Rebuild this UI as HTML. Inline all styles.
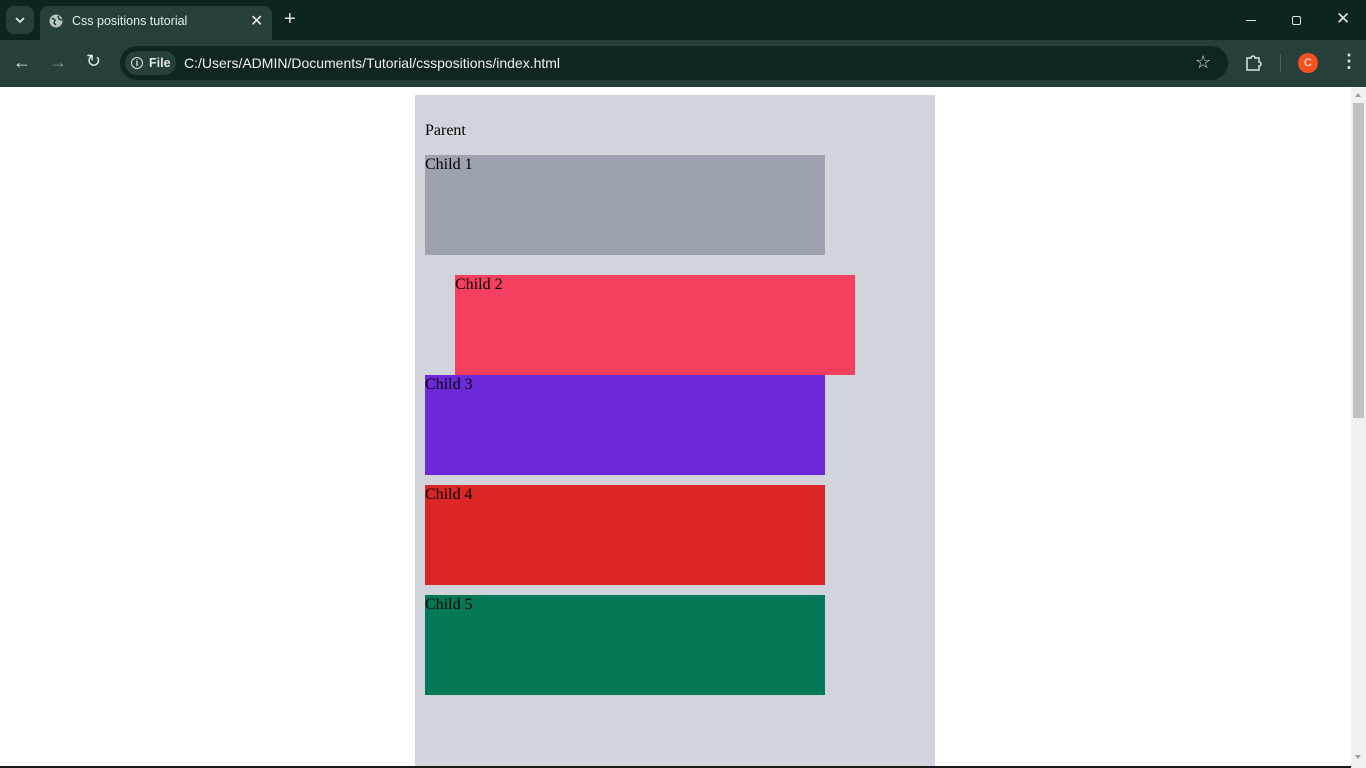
<!DOCTYPE html>
<html><head><style>
*{margin:0;padding:0;box-sizing:border-box}
body{width:1366px;height:768px;overflow:hidden;background:#fff;font-family:"Liberation Sans",sans-serif;position:relative}
.top{position:absolute;left:0;top:0;width:1366px;height:40px;background:#0c2523}
.tab{position:absolute;left:40px;top:6px;width:232px;height:34px;background:#263f3b;border-radius:8px 8px 0 0;color:#e6ecea;font-size:12.5px}
.tb{position:absolute;left:0;top:40px;width:1366px;height:47px;background:#263f3b}
.omni{position:absolute;left:120px;top:46px;width:1108px;height:34px;background:#0e2523;border-radius:17px}
.c{position:absolute;color:#dfe6e4}
.page{position:absolute;left:0;top:87px;width:1351px;height:681px;background:#fff}
.par{position:absolute;left:415px;top:95px;width:520px;height:673px;background:#d1d5db}
.b{position:absolute;width:400px;height:100px;font-family:"Liberation Serif",serif;font-size:16px;color:#000;line-height:20px}
.sb{position:absolute;left:1351px;top:87px;width:15px;height:681px;background:#f1f1f1}
</style></head><body>
<div class="top"></div>
<div style="position:absolute;left:6px;top:6px;width:28px;height:28px;background:#263f3b;border-radius:8px"></div>
<svg style="position:absolute;left:14px;top:15px" width="12" height="10"><path d="M2 3l4 4 4-4" stroke="#dfe6e4" stroke-width="1.8" fill="none"/></svg>
<div class="tab"><svg style="position:absolute;left:8px;top:7px" width="16" height="16"><circle cx="8" cy="8" r="6.5" fill="#b9c4c1"/><path d="M4 5l3 2-1 3 2 2M10 3l1 3 3 1" stroke="#263f3b" stroke-width="1.5" fill="none"/></svg><span style="position:absolute;left:32px;top:8px">Css positions tutorial</span><span style="position:absolute;left:210px;top:5px;font-size:16px">✕</span></div>
<span class="c" style="left:284px;top:8px;font-size:20px">+</span>
<div style="position:absolute;left:1246px;top:20px;width:10px;height:1px;background:#dfe6e4"></div>
<div style="position:absolute;left:1292px;top:16px;width:9px;height:9px;border:1.3px solid #dfe6e4;border-radius:2px"></div>
<span class="c" style="left:1336px;top:9px;font-size:17px">✕</span>
<div class="tb"></div>
<span class="c" style="left:13px;top:52px;font-size:18px">←</span>
<span class="c" style="left:49px;top:52px;font-size:18px;color:#7e8f8b">→</span>
<span class="c" style="left:86px;top:51px;font-size:18px">↻</span>
<div class="omni"></div>
<div style="position:absolute;left:125px;top:51px;width:51px;height:24px;background:#263f3b;border-radius:12px"></div>
<div style="position:absolute;left:131px;top:57px;width:12px;height:12px;border:1.3px solid #dfe6e4;border-radius:50%;color:#dfe6e4;font-size:9px;text-align:center;line-height:10px;font-weight:bold">i</div>
<span class="c" style="left:149px;top:56px;font-size:12.5px;font-weight:bold">File</span>
<span class="c" style="left:184px;top:55px;font-size:14px;color:#eef2f1">C:/Users/ADMIN/Documents/Tutorial/csspositions/index.html</span>
<span class="c" style="left:1195px;top:52px;font-size:18px">☆</span>
<svg style="position:absolute;left:1245px;top:54px" width="18" height="18"><path d="M2 4h4a2 2 0 0 1 4 0h4v4a2 2 0 0 1 0 4v4H2z" stroke="#dfe6e4" stroke-width="1.5" fill="none"/></svg>
<div style="position:absolute;left:1280px;top:54px;width:1px;height:18px;background:#4b615d"></div>
<div style="position:absolute;left:1298px;top:53px;width:20px;height:20px;border-radius:50%;background:#f4511e;color:#fff;font-size:11px;text-align:center;line-height:20px">C</div>
<span class="c" style="left:1340px;top:51px;font-size:18px;font-weight:bold">⋮</span>
<div class="page"></div>
<div class="par"><div style="position:absolute;left:10px;top:27px;font-family:'Liberation Serif',serif;font-size:16px">Parent</div></div>
<div class="b" style="left:425px;top:155px;background:#9ca3af">Child 1</div>
<div class="b" style="left:455px;top:275px;background:#f43f5e">Child 2</div>
<div class="b" style="left:425px;top:375px;background:#6d28d9">Child 3</div>
<div class="b" style="left:425px;top:485px;background:#dc2626">Child 4</div>
<div class="b" style="left:425px;top:595px;background:#047857">Child 5</div>
<div class="sb"><div style="position:absolute;left:2px;top:16px;width:11px;height:315px;background:#c1c1c1"></div>
<div style="position:absolute;left:4px;top:6px;border:3.5px solid transparent;border-bottom:4px solid #a0a0a0;border-top:0"></div>
<div style="position:absolute;left:4px;top:668px;border:3.5px solid transparent;border-top:4px solid #a0a0a0;border-bottom:0"></div></div>
<div style="position:absolute;left:0;top:766px;width:1351px;height:2px;background:#1a1a1a"></div>
</body></html>
